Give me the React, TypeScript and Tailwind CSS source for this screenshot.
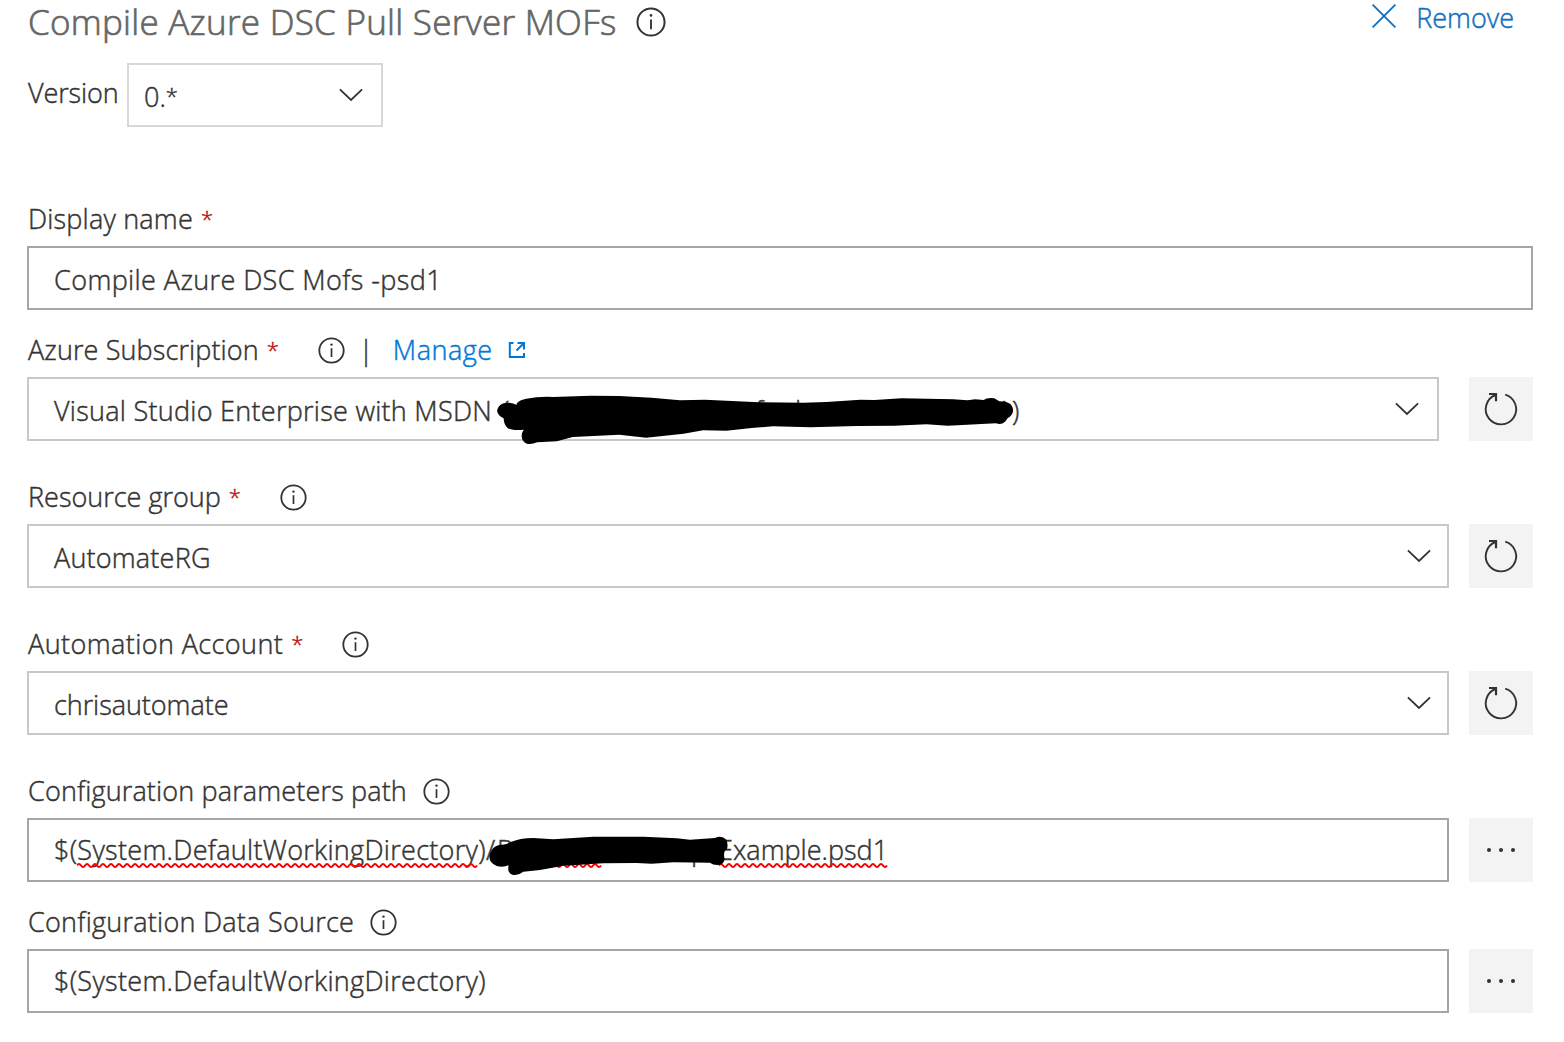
import type { ReactNode } from "react";

function InfoIcon({ size = 27, className = "" }: { size?: number; className?: string }) {
  return (
    <svg width={size} height={size} viewBox="0 0 27 27" fill="none" className={`shrink-0 ${className}`}>
      <circle cx="13.5" cy="13.5" r="12.2" stroke="#333" strokeWidth="1.8" />
      <path d="M13.5 11.2V20" stroke="#333" strokeWidth="1.7" />
      <circle cx="13.5" cy="7.6" r="1.2" fill="#333" />
    </svg>
  );
}

function Chevron({ className = "" }: { className?: string }) {
  return (
    <svg width="24" height="14" viewBox="0 0 24 14" fill="none" className={`shrink-0 ${className}`}>
      <path d="M.9 1.3L12 12L23.1 1.3" stroke="#333" strokeWidth="1.8" />
    </svg>
  );
}

function RefreshButton() {
  return (
    <button className="size-16 shrink-0 bg-[#f3f3f3]">
      <svg width="64" height="64" viewBox="0 0 64 64" fill="none" stroke="#333">
        <path d="M36.2 17.6A15.2 15.2 0 1 1 26.5 18" strokeWidth="1.9" />
        <path d="M20 17H27V24.2" strokeWidth="2.2" />
      </svg>
    </button>
  );
}

function MoreButton() {
  return (
    <button className="size-16 shrink-0 bg-[#f3f3f3]">
      <svg width="64" height="64" viewBox="0 0 64 64" fill="#333">
        <circle cx="20" cy="32" r="2" />
        <circle cx="32" cy="32" r="2" />
        <circle cx="44" cy="32" r="2" />
      </svg>
    </button>
  );
}

function Label({ text, spacing = "", required = false, children }: { text: string; spacing?: string; required?: boolean; children?: ReactNode }) {
  return (
    <div className="mb-[9px] flex h-9 items-center pl-px leading-9 whitespace-pre">
      <span className={spacing}>{text}</span>
      {required && <span className="-mt-0.5 ml-2 w-3 text-[22px] leading-9 text-[#b80f0f]">*</span>}
      {children}
    </div>
  );
}

function Field({ children, tone = "border-[#c8c8c8]", pad = "pt-[14px]" }: { children: ReactNode; tone?: string; pad?: string }) {
  return (
    <div className={`relative flex h-16 min-w-0 flex-1 items-start border-2 pl-[25px] leading-9 whitespace-pre ${tone} ${pad}`}>
      {children}
    </div>
  );
}

function wave(from: number, to: number) {
  let d = `M${from} 3.5`;
  for (let x = from; x < to; x += 8) d += `q2 -3 4 0t4 0`;
  return d;
}

export default function App() {
  return (
    <div className="h-[1042px] w-[1564px] bg-white pr-[31px] pl-[27px] font-['Open_Sans',sans-serif] text-[27px] font-light text-[#333] [-webkit-text-stroke:0.45px]">
      <header className="flex h-[63px] items-start justify-between">
        <div className="flex items-start pl-px">
          <h1 className="-mt-0.5 text-[35px] leading-[48px] font-light tracking-[0.27px] whitespace-pre text-[#666] [-webkit-text-stroke:0.7px]">Compile Azure DSC Pull Server MOFs</h1>
          <InfoIcon size={30} className="mt-[7px] ml-[19px]" />
        </div>
        <button className="mr-[19px] flex items-start text-[#106ebe]">
          <svg width="24" height="24" viewBox="0 0 24 24" className="mt-1 mr-5">
            <path d="M.6 .6L23.4 23.4M23.4 .6L.6 23.4" stroke="#106ebe" strokeWidth="1.8" />
          </svg>
          <span className="leading-9">Remove</span>
        </button>
      </header>

      <div className="flex h-16">
        <span className="w-[100px] pt-3 pl-px leading-9 tracking-[-0.1px]">Version</span>
        <div className="flex w-64 items-start border-2 border-[#d8d8d8] pt-[14px] pl-[15px] leading-9">
          0.<span className="text-[22px] leading-8">*</span>
          <Chevron className="mt-[9px] mr-[18px] ml-auto" />
        </div>
      </div>

      <section className="mt-[74px]">
        <Label text="Display name" spacing="tracking-[0.2px]" required />
        <div className="flex">
          <Field tone="border-[#a6a6a6]">
            <span className="tracking-[0.4px]">Compile Azure DSC Mofs -psd1</span>
          </Field>
        </div>
      </section>

      <section className="mt-[22px]">
        <Label text="Azure Subscription" spacing="tracking-[0.12px]" required>
          <InfoIcon className="ml-[39px]" />
          <span className="ml-[14px] w-[34px]">|</span>
          <a className="flex items-center tracking-[0.5px] text-[#0078d7]">
            Manage
            <svg width="18" height="18" viewBox="0 0 18 18" fill="none" stroke="#0078d7" strokeWidth="2" className="ml-[15px]">
              <path d="M5.5 2H1.8V16H16V12M9.5 2H16V8.5M15.8 2.2L8.5 9.5" />
            </svg>
          </a>
        </Label>
        <div className="flex gap-[30px]">
          <Field>
            <span className="tracking-[0.27px]">Visual Studio Enterprise with MSDN</span>
            <span className="ml-[10px] w-[253px]">(</span>
            <span className="w-10">f</span>
            <span className="w-[201px]">h</span>
            <span className="w-4">1</span>
            <span>)</span>
            <Chevron className="mt-[9px] mr-[18px] ml-auto" />
            <svg width="560" height="70" viewBox="0 0 1568 210" preserveAspectRatio="none" className="pointer-events-none absolute top-[1px] left-[451px]">
              <path d="M48 94C49 77 61 68 78 68C90 68 97 72 102 74C105 64 114 59 130 56Q165 49 205 51L310 47L390 48L480 53L560 61L630 59L780 67L905 68L970 66L1065 59L1105 60L1180 55L1325 58L1365 61L1387 58L1410 60Q1420 52 1440 55L1454 64Q1477 65 1485 72C1497 85 1495 105 1478 114L1470 125Q1460 135 1445 130L1310 137L1250 133L1160 137L1055 138L925 142L820 139L760 144L690 152L625 151L570 161L465 173L390 164L260 171L215 184L160 187Q143 195 131 191C113 183 114 159 123 149Q90 153 77 144Q66 133 67 115Q50 108 48 94Z" fill="#000" />
            </svg>
          </Field>
          <RefreshButton />
        </div>
      </section>

      <section className="mt-[38px]">
        <Label text="Resource group" required>
          <InfoIcon className="ml-[39px]" />
        </Label>
        <div className="flex gap-5">
          <Field>
            <span className="tracking-[0.2px]">AutomateRG</span>
            <Chevron className="mt-[9px] mr-4 ml-auto" />
          </Field>
          <RefreshButton />
        </div>
      </section>

      <section className="mt-[38px]">
        <Label text="Automation Account" spacing="tracking-[0.42px]" required>
          <InfoIcon className="ml-[39px]" />
        </Label>
        <div className="flex gap-5">
          <Field>
            <span className="tracking-[-0.05px]">chrisautomate</span>
            <Chevron className="mt-[9px] mr-4 ml-auto" />
          </Field>
          <RefreshButton />
        </div>
      </section>

      <section className="mt-[38px]">
        <Label text="Configuration parameters path" spacing="tracking-[0.15px]">
          <InfoIcon className="ml-4" />
        </Label>
        <div className="flex gap-5">
          <Field tone="border-[#a6a6a6]" pad="pt-3">
            <span className="w-[443px] tracking-[0.3px]">$(System.DefaultWorkingDirectory)/</span>
            <span className="w-[194px]">R</span>
            <span className="w-[27px]">p</span>
            <span>Example.psd1</span>
            <svg width="840" height="8" viewBox="0 0 840 8" fill="none" stroke="#f00" strokeWidth="2" className="pointer-events-none absolute top-[42px] left-12">
              <path d={wave(0, 400)} />
              <path d={wave(468, 524)} />
              <path d={wave(642, 808)} />
            </svg>
            <svg width="270" height="70" viewBox="0 0 810 210" className="pointer-events-none absolute top-0 left-[431px]">
              <path d="M88 110C90 92 101 76 123 74Q140 75 150 67Q180 54 220 54L280 58L400 50L550 50L650 55L690 59L765 54Q785 45 799 59Q805 74 801 87Q788 94 794 117Q791 135 772 135Q758 135 750 128L640 127L575 131L530 129L430 130L310 137L240 150L190 155Q172 169 157 164C145 160 143 148 146 136Q130 143 110 138Q88 128 88 110Z" fill="#000" />
            </svg>
          </Field>
          <MoreButton />
        </div>
      </section>

      <section className="mt-[22px]">
        <Label text="Configuration Data Source" spacing="tracking-[0.25px]">
          <InfoIcon className="ml-4" />
        </Label>
        <div className="flex gap-5">
          <Field tone="border-[#a6a6a6]" pad="pt-3">
            <span className="tracking-[0.3px]">$(System.DefaultWorkingDirectory)</span>
          </Field>
          <MoreButton />
        </div>
      </section>
    </div>
  );
}
